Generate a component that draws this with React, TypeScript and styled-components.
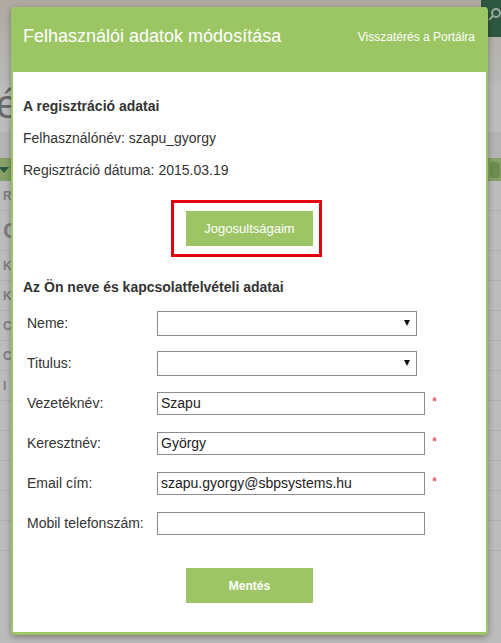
import styled, { createGlobalStyle } from 'styled-components';

const GlobalStyle = createGlobalStyle`
  html, body {
    margin: 0;
    padding: 0;
    background: #ffffff;
  }

  body {
    font-family: 'Liberation Sans', Arial, sans-serif;
    color: #333333;
  }

  * {
    box-sizing: border-box;
  }
`;

const Stage = styled.div`
  position: relative;
  width: 501px;
  height: 643px;
  overflow: hidden;
  background: #f8f8f8;
`;

/* the portal page behind the dialog */

const Hero = styled.div`
  height: 84px;
  display: flex;
  justify-content: flex-end;
  align-items: flex-start;
  background: linear-gradient(180deg, #e6dfd3 0%, #efece7 60%, #f3f3f3 100%);
`;

const SearchTab = styled.div`
  width: 20px;
  height: 37px;
  display: flex;
  justify-content: flex-end;
  padding-top: 8px;
  background: #3a7355;
  color: #cfe0d6;
`;

const PageTitle = styled.div`
  margin: 0 0 0 -4px;
  height: 48px;
  font-size: 40px;
  line-height: 40px;
  color: #8c8c8c;
`;

const GreyBand = styled.div`
  height: 26px;
  background: #ededed;
`;

const NavBar = styled.div`
  height: 23px;
  display: flex;
  align-items: center;
  justify-content: space-between;
  padding: 0 1px 0 0;
  background: #b0d488;
`;

const NavArrow = styled.span`
  width: 0;
  height: 0;
  border-left: 5px solid transparent;
  border-right: 5px solid transparent;
  border-top: 6px solid #3a7355;
  margin-left: -1px;
`;

const NavKnob = styled.span`
  width: 10px;
  height: 16px;
  border-radius: 4px;
  background: #8fb86a;
`;

const ListRow = styled.div<{ $tall?: boolean }>`
  height: ${({ $tall }) => ($tall ? 40 : 30)}px;
  display: flex;
  align-items: center;
  padding-left: 3px;
  border-bottom: 1px solid #e6e6e6;
  font-size: ${({ $tall }) => ($tall ? 22 : 12)}px;
  font-weight: 700;
  color: #a5a5a5;
`;

const Overlay = styled.div`
  position: absolute;
  inset: 0;
  background: rgba(0, 0, 0, 0.24);
`;

/* the dialog */

const Modal = styled.div`
  position: absolute;
  top: 7px;
  left: 11px;
  width: 477px;
  height: 628px;
  overflow: hidden;
  border: 2px solid #9cc664;
  border-top: 0;
  border-bottom-width: 3px;
  border-radius: 4px;
  background: #ffffff;
  box-shadow: 0 2px 6px rgba(0, 0, 0, 0.35);
`;

const Header = styled.div`
  height: 65px;
  margin: 0 -2px;
  padding: 0 13px 6px 12px;
  display: flex;
  align-items: center;
  justify-content: space-between;
  background: #9cc664;
  color: #ffffff;
`;

const Title = styled.h2`
  margin: 0;
  font-size: 18px;
  font-weight: 400;
`;

const PortalLink = styled.a`
  font-size: 12px;
  color: #ffffff;
  text-decoration: none;
  cursor: pointer;
`;

const Body = styled.div`
  padding: 18px 10px 0;
`;

const SectionTitle = styled.h3`
  margin: 0;
  font-size: 14px;
  font-weight: 700;
  line-height: 32px;
  color: #333333;
`;

const InfoLine = styled.p`
  margin: 0;
  font-size: 14px;
  line-height: 32px;
  color: #333333;
`;

const ButtonRow = styled.div<{ $top: number; $bottom: number }>`
  display: flex;
  justify-content: center;
  margin: ${({ $top, $bottom }) => `${$top}px 0 ${$bottom}px`};
`;

const ActionButton = styled.button<{ $bold?: boolean; $marked?: boolean }>`
  position: relative;
  width: 127px;
  height: 35px;
  border: 0;
  background: #9dc566;
  color: #ffffff;
  font-family: 'Liberation Sans', Arial, sans-serif;
  font-size: ${({ $bold }) => ($bold ? 12 : 13)}px;
  font-weight: ${({ $bold }) => ($bold ? 700 : 400)};
  cursor: pointer;

  &::after {
    content: '';
    display: ${({ $marked }) => ($marked ? 'block' : 'none')};
    position: absolute;
    top: -11px;
    bottom: -11px;
    left: -15px;
    right: -9px;
    border: 3px solid #e4000f;
    pointer-events: none;
  }
`;

const FieldRow = styled.div`
  height: 40px;
  display: grid;
  grid-template-columns: 130px auto;
  align-items: center;
  padding-left: 4px;
`;

const Label = styled.label`
  font-size: 14px;
  color: #333333;
`;

const FieldCell = styled.div`
  display: flex;
  align-items: flex-start;
`;

const SelectWrap = styled.div`
  position: relative;
  width: 260px;
  height: 25px;

  &::after {
    content: '';
    position: absolute;
    top: 9px;
    right: 7px;
    border-left: 3.5px solid transparent;
    border-right: 3.5px solid transparent;
    border-top: 6px solid #111111;
    pointer-events: none;
  }
`;

const Select = styled.select`
  width: 100%;
  height: 100%;
  appearance: none;
  border: 1px solid #8c8c8c;
  border-radius: 0;
  background: #ffffff;
  font-family: 'Liberation Sans', Arial, sans-serif;
  font-size: 14px;
  outline: none;
`;

const TextInput = styled.input`
  width: 268px;
  height: 23px;
  padding: 0 3px;
  border: 1px solid #8c8c8c;
  border-radius: 0;
  font-family: 'Liberation Sans', Arial, sans-serif;
  font-size: 14px;
  color: #222222;
  outline: none;
`;

const Required = styled.span`
  margin-left: 7px;
  padding-top: 3px;
  font-size: 13px;
  line-height: 13px;
  color: #e2303c;
`;

type Field = {
  label: string;
  kind: 'select' | 'text';
  value?: string;
  required?: boolean;
};

const fields: Field[] = [
  { label: 'Neme:', kind: 'select' },
  { label: 'Titulus:', kind: 'select' },
  { label: 'Vezetéknév:', kind: 'text', value: 'Szapu', required: true },
  { label: 'Keresztnév:', kind: 'text', value: 'György', required: true },
  { label: 'Email cím:', kind: 'text', value: 'szapu.gyorgy@sbpsystems.hu', required: true },
  { label: 'Mobil telefonszám:', kind: 'text', value: '' },
];

const SearchIcon = () => (
  <svg width="13" height="13" viewBox="0 0 13 13" fill="none" stroke="currentColor" strokeWidth="2">
    <circle cx="8" cy="5" r="4" />
    <line x1="5" y1="8" x2="1" y2="12" />
  </svg>
);

const App = () => {
  return (
    <Stage>
      <GlobalStyle />

      <div aria-hidden="true">
        <Hero>
          <SearchTab>
            <SearchIcon />
          </SearchTab>
        </Hero>
        <PageTitle>é</PageTitle>
        <GreyBand />
        <NavBar>
          <NavArrow />
          <NavKnob />
        </NavBar>
        <ListRow>R</ListRow>
        <ListRow $tall>C</ListRow>
        <ListRow>K</ListRow>
        <ListRow>K</ListRow>
        <ListRow>C</ListRow>
        <ListRow>C</ListRow>
        <ListRow>I</ListRow>
        <ListRow />
        <ListRow />
        <ListRow />
        <ListRow />
        <ListRow />
      </div>
      <Overlay />

      <Modal>
        <Header>
          <Title>Felhasználói adatok módosítása</Title>
          <PortalLink>Visszatérés a Portálra</PortalLink>
        </Header>

        <Body>
          <SectionTitle>A regisztráció adatai</SectionTitle>
          <InfoLine>Felhasználónév: szapu_gyorgy</InfoLine>
          <InfoLine>Regisztráció dátuma: 2015.03.19</InfoLine>

          <ButtonRow $top={25} $bottom={25}>
            <ActionButton $marked>Jogosultságaim</ActionButton>
          </ButtonRow>

          <SectionTitle>Az Ön neve és kapcsolatfelvételi adatai</SectionTitle>

          {fields.map((field) => (
            <FieldRow key={field.label}>
              <Label>{field.label}</Label>
              <FieldCell>
                {field.kind === 'select' ? (
                  <SelectWrap>
                    <Select defaultValue="">
                      <option value=""></option>
                    </Select>
                  </SelectWrap>
                ) : (
                  <TextInput type="text" defaultValue={field.value} />
                )}
                {field.required && <Required>*</Required>}
              </FieldCell>
            </FieldRow>
          ))}

          <ButtonRow $top={25} $bottom={0}>
            <ActionButton $bold>Mentés</ActionButton>
          </ButtonRow>
        </Body>
      </Modal>
    </Stage>
  );
};

export default App;
